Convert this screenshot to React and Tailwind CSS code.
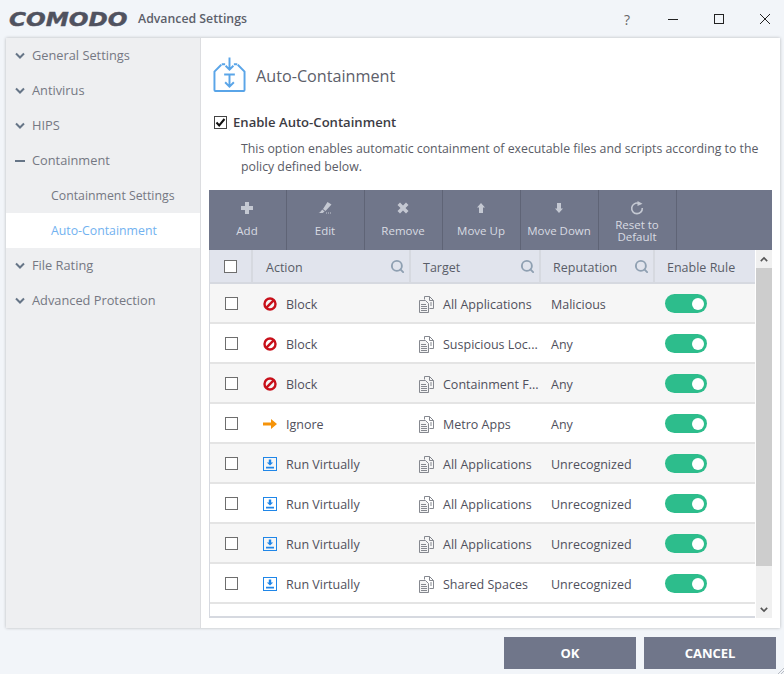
import { Search } from 'lucide-react';

const navItems = [
  { label: 'General Settings', icon: 'chevron' },
  { label: 'Antivirus', icon: 'chevron' },
  { label: 'HIPS', icon: 'chevron' },
  { label: 'Containment', icon: 'minus' },
  { label: 'Containment Settings', sub: true },
  { label: 'Auto-Containment', sub: true, active: true },
  { label: 'File Rating', icon: 'chevron' },
  { label: 'Advanced Protection', icon: 'chevron' },
];

const rows = [
  { action: 'Block', target: 'All Applications', rep: 'Malicious' },
  { action: 'Block', target: 'Suspicious Loc...', rep: 'Any' },
  { action: 'Block', target: 'Containment F...', rep: 'Any' },
  { action: 'Ignore', target: 'Metro Apps', rep: 'Any' },
  { action: 'Run Virtually', target: 'All Applications', rep: 'Unrecognized' },
  { action: 'Run Virtually', target: 'All Applications', rep: 'Unrecognized' },
  { action: 'Run Virtually', target: 'All Applications', rep: 'Unrecognized' },
  { action: 'Run Virtually', target: 'Shared Spaces', rep: 'Unrecognized' },
];

function Chevron({ up, className }) {
  return (
    <svg width="10" height="7" viewBox="0 0 10 7" className={className}>
      <path d={up ? 'M1 5.5 5 1.5l4 4' : 'M1 1.5l4 4 4-4'} fill="none" stroke="currentColor" strokeWidth="2" />
    </svg>
  );
}

function ActionIcon({ type }) {
  if (type === 'Block') {
    return (
      <svg width="14" height="14" viewBox="0 0 14 14" className="mt-[2px]">
        <circle cx="7" cy="7" r="5.5" fill="none" stroke="#c8101a" strokeWidth="2.4" />
        <path d="M3.4 10.6 10.6 3.4" stroke="#c8101a" strokeWidth="2.4" />
      </svg>
    );
  }
  if (type === 'Ignore') {
    return (
      <svg width="14" height="14" viewBox="0 0 14 14" className="mt-[2px]">
        <path d="M0 5.5h8V2l6 5-6 5V8.5H0z" fill="#f5930a" />
      </svg>
    );
  }
  return (
    <svg width="14" height="14" viewBox="0 0 14 14" className="mt-[2px]">
      <rect x="0.5" y="0.5" width="13" height="13" fill="none" stroke="#1f86e8" />
      <path d="M5.8 2.5h2.4v3h2L7 8.6 3.8 5.5h2zM3 9.8h8v1.6H3z" fill="#1f86e8" />
    </svg>
  );
}

function DocsIcon() {
  return (
    <svg width="15" height="17" viewBox="0 0 15 17" fill="none" stroke="#85888f" className="mt-[2px]">
      <path d="M5.5 3.5V.5h5l4 4v8h-4" />
      <path d="M10.5.5v4h4" />
      <path d="M.5 4.5h6l3 3v9h-9z" fill="#f4f4f4" />
      <path d="M2 8.5h5M2 10.5h6M2 12.5h6M2 14.5h6M11 7h2M11 9h2" />
    </svg>
  );
}

function ToolIcon({ name }) {
  const fill = '#c4c8d2';
  if (name === 'Add') return <svg width="14" height="14" viewBox="0 0 14 14"><path d="M5 1h4v4h4v4H9v4H5V9H1V5h4z" fill={fill} /></svg>;
  if (name === 'Edit') return <svg width="14" height="14" viewBox="0 0 14 14"><path d="M9.5 1 13.500 3.500 7.500 10 5 8zM4.200 8.400l2.400 2-2 1.600H.5c1.800-.8 2.700-2.200 3.700-3.600zM8 11.600h1v.8H8zm2 0h1v.8h-1zm2 0h1v.8h-1z" fill={fill} /></svg>;
  if (name === 'Remove') return <svg width="14" height="14" viewBox="0 0 14 14"><path d="M4 1.5 7 4.500l3-3L12.500 4 9.500 7l3 3-2.500 2.500-3-3-3 3L1.500 10l3-3-3-3z" fill={fill} /></svg>;
  if (name === 'Move Up') return <svg width="14" height="14" viewBox="0 0 14 14"><path d="M7 2 11 6.500H9V12H5V6.500H3z" fill={fill} /></svg>;
  if (name === 'Move Down') return <svg width="14" height="14" viewBox="0 0 14 14"><path d="M5 2h4v5.500h2L7 12 3 7.500h2z" fill={fill} /></svg>;
  return (
    <svg width="14" height="14" viewBox="0 0 14 14" fill="none">
      <path d="M8.600 2.300A5.300 5.300 0 1 0 12.300 7" stroke={fill} strokeWidth="1.600" />
      <path d="M7.500 0v5l5-2.200z" fill={fill} />
    </svg>
  );
}

function CheckBox() {
  return <div className="w-[13px] h-[13px] border border-[#6e6e6e] bg-white" />;
}

function Toggle() {
  return (
    <div className="w-[42px] h-[19px] rounded-full bg-[#2dbd8c] flex items-center justify-end pr-[3px]">
      <div className="w-[12px] h-[12px] rounded-full bg-white" />
    </div>
  );
}

function HeaderCell({ label, width, pl = 'pl-[13px]' }) {
  return (
    <div className={`${width} ${pl} pr-[4px] h-full flex items-center justify-between border-r-2 border-[#d6d9e0]`}>
      <span className="pt-[4px]">{label}</span>
      <Search size={15} strokeWidth={3} className="text-[#8fa0b2] mt-[1px]" />
    </div>
  );
}

export default function App() {
  return (
    <div className="relative w-[784px] h-[674px] bg-[#f2f5f9] flex flex-col overflow-hidden font-['Open_Sans','Noto_Sans',sans-serif] text-[12.500px] text-[#50505c]">
      {/* title bar */}
      <div className="h-[38px] shrink-0 flex items-center pl-[9px]">
        <span className="inline-block w-[118px] origin-left scale-x-[1.16] font-['DejaVu_Sans',sans-serif] font-bold italic text-[20px] leading-none text-[#50525f] [-webkit-text-stroke:0.4px_#50525f]">COMODO</span>
        <span className="ml-[11px] text-[12.300px] font-semibold text-[#5c5f6a]">Advanced Settings</span>
        <div className="ml-auto flex items-center text-[#444]">
          <span className="w-[12px] text-center text-[14px] text-[#666]">?</span>
          <svg width="12" height="12" viewBox="0 0 12 12" className="ml-[34px]"><path d="M1 6.500h10" stroke="#222" /></svg>
          <svg width="12" height="12" viewBox="0 0 12 12" className="ml-[34px]"><rect x="1.500" y="1.500" width="9" height="9" fill="none" stroke="#222" /></svg>
          <svg width="12" height="12" viewBox="0 0 12 12" className="ml-[34px] mr-[13px]"><path d="M1 1l10 10M11 1 1 11" stroke="#222" /></svg>
        </div>
      </div>

      {/* main panel */}
      <div className="ml-[6px] mr-[4px] h-[590px] shrink-0 flex bg-white shadow-[0_0_3px_rgba(0,0,0,0.25)]">
        <div className="w-[195px] shrink-0 bg-[#eeeff1] border-r border-[#dcdde0]">
          {navItems.map((item) => (
            <div
              key={item.label}
              className={`h-[35px] flex items-center ${item.active ? 'bg-white text-[#72b2f0]' : 'text-[#757883]'} ${item.sub ? 'pl-[45px] pt-[2px] text-[12.300px]' : 'pl-[9px] text-[12.800px]'}`}
            >
              {item.icon === 'chevron' && <Chevron className="text-[#667587] mr-[7px]" />}
              {item.icon === 'minus' && <div className="w-[10px] h-[2px] bg-[#667587] mr-[7px]" />}
              <span>{item.label}</span>
            </div>
          ))}
        </div>

        <div className="flex-1 min-w-0 pl-[8px] pr-[8px]">
          <div className="h-[76px] flex items-center pl-[4px]">
            <svg width="33" height="36" viewBox="0 0 34 36" fill="none" stroke="#5aa5e8" strokeWidth="2" className="mt-[-2px]">
              <path d="M8.500 7.500 1.500 14.500V33.500a1 1 0 0 0 1 1h29a1 1 0 0 0 1-1V14.500l-7-7" />
              <path d="M9 7h3.500M25 7h-3.500M17 0v12M13 8.500l4 4 4-4M17 18v12M12.500 25.500l4.500 4.500 4.500-4.500M11.500 17.500h11" />
            </svg>
            <span className="ml-[10px] text-[16.200px] text-[#5d606a]">Auto-Containment</span>
          </div>

          <div className="flex items-center pl-[5px] h-[17px]">
            <div className="w-[13px] h-[13px] border border-[#444] bg-white flex items-center justify-center">
              <svg width="11" height="11" viewBox="0 0 11 11"><path d="M1.500 5.500 4.200 8.500 9.500 2" fill="none" stroke="#111" strokeWidth="2" /></svg>
            </div>
            <span className="ml-[6px] font-semibold text-[13.100px] text-[#3c3c44]">Enable Auto-Containment</span>
          </div>
          <p className="mt-[9px] ml-[32px] mr-[4px] leading-[18px] text-[#5a5c66] text-[12.300px]">
            This option enables automatic containment of executable files and scripts according to the policy defined below.
          </p>

          {/* toolbar */}
          <div className="mt-[14px] h-[60px] bg-[#70768a] flex text-[#d8dbe2] text-[11.500px]">
            {['Add', 'Edit', 'Remove', 'Move Up', 'Move Down'].map((label) => (
              <div key={label} className="w-[78px] h-full border-r border-[#5f6476] flex flex-col items-center pt-[11px] pr-[1px]">
                <ToolIcon name={label} />
                <span className="mt-[8px] leading-[16px]">{label}</span>
              </div>
            ))}
            <div className="w-[78px] h-full border-r border-[#5f6476] flex flex-col items-center pt-[11px] pr-[1px]">
              <ToolIcon name="Reset" />
              <span className="mt-[4px] leading-[12px] text-center">Reset to Default</span>
            </div>
          </div>

          {/* table and scrollbar */}
          <div className="flex h-[368px] w-[563px]">
            <div className="w-[546px] border-l border-b-2 border-[#d6d9e0] flex flex-col">
              <div className="h-[34px] shrink-0 flex items-center bg-[#e1e4ed] border-b-2 border-[#d6d9e0] text-[#595d68]">
                <div className="w-[43px] h-full border-r-2 border-[#d6d9e0] flex items-center justify-center pr-[1px]">
                  <CheckBox />
                </div>
                <HeaderCell label="Action" width="w-[158px]" />
                <HeaderCell label="Target" width="w-[130px]" pl="pl-[12px]" />
                <HeaderCell label="Reputation" width="w-[114px]" pl="pl-[12px]" />
                <div className="pl-[12px] pt-[4px]">Enable Rule</div>
              </div>
              {rows.map((row, i) => (
                <div
                  key={i}
                  className={`h-[40px] shrink-0 flex items-center border-b-2 border-[#e4e4e4] ${i % 2 === 0 ? 'bg-[#f6f6f6]' : 'bg-white'}`}
                >
                  <div className="w-[43px] flex justify-center pr-[1px] mt-[1px]"><CheckBox /></div>
                  <div className="w-[158px] pl-[10px] flex items-center">
                    <ActionIcon type={row.action === 'Run Virtually' ? 'Run' : row.action} />
                    <span className="ml-[9px] pt-[4px]">{row.action}</span>
                  </div>
                  <div className="w-[130px] pl-[8px] flex items-center">
                    <DocsIcon />
                    <span className="ml-[9px] pt-[4px] whitespace-nowrap">{row.target}</span>
                  </div>
                  <div className="w-[114px] pl-[10px] pt-[4px]">{row.rep}</div>
                  <div className="pl-[10px] mt-[1px]"><Toggle /></div>
                </div>
              ))}
            </div>
            <div className="w-[16px] ml-[1px] bg-[#f0f0f0] flex flex-col items-center">
              <div className="h-[18px] flex items-center justify-center text-[#555]"><Chevron up className="w-[8px]" /></div>
              <div className="w-full h-[298px] bg-[#cdcdcd]" />
              <div className="mt-auto h-[18px] flex items-center justify-center text-[#555]"><Chevron className="w-[8px]" /></div>
            </div>
          </div>
        </div>
      </div>

      {/* footer */}
      <div className="flex justify-end gap-[8px] pt-[9px] pr-[8px] text-white font-bold text-[13px]">
        <div className="w-[132px] h-[32px] bg-[#70768a] flex items-center justify-center pt-[2px]">OK</div>
        <div className="w-[132px] h-[32px] bg-[#70768a] flex items-center justify-center pt-[2px]">CANCEL</div>
      </div>

      {/* resize grip */}
      <svg width="6" height="6" viewBox="0 0 6 6" className="absolute right-0 bottom-0">
        <path d="M0 6 6 0M3 6l3-3" stroke="#b8bcc4" />
      </svg>
    </div>
  );
}
